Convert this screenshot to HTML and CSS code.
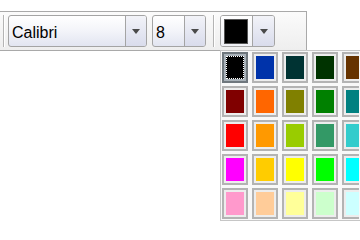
FILE: index.html
```html
<!DOCTYPE html>
<html>
<head>
<meta charset="utf-8">
<link rel="stylesheet" href="styles.css">
</head>
<body>
<div class="toolbar">
  <span class="sep"></span>
  <div class="combo font">
    <span class="value">Calibri</span>
    <span class="drop"><span class="arrow"></span></span>
  </div>
  <div class="combo size">
    <span class="value">8</span>
    <span class="drop"><span class="arrow"></span></span>
  </div>
  <span class="sep sep2"></span>
  <div class="combo colorbtn">
    <span class="swatch-wrap"><span class="swatch"></span></span>
    <span class="drop"><span class="arrow"></span></span>
  </div>
</div>
<div class="palette">
  <div class="grid">
    <span class="cell selected"><span class="fill" style="background:#000000"></span></span>
    <span class="cell"><span class="fill" style="background:#0033aa"></span></span>
    <span class="cell"><span class="fill" style="background:#003333"></span></span>
    <span class="cell"><span class="fill" style="background:#003300"></span></span>
    <span class="cell"><span class="fill" style="background:#663300"></span></span>
    <span class="cell"><span class="fill" style="background:#800000"></span></span>
    <span class="cell"><span class="fill" style="background:#ff6600"></span></span>
    <span class="cell"><span class="fill" style="background:#808000"></span></span>
    <span class="cell"><span class="fill" style="background:#008000"></span></span>
    <span class="cell"><span class="fill" style="background:#008080"></span></span>
    <span class="cell"><span class="fill" style="background:#ff0000"></span></span>
    <span class="cell"><span class="fill" style="background:#ff9900"></span></span>
    <span class="cell"><span class="fill" style="background:#99cc00"></span></span>
    <span class="cell"><span class="fill" style="background:#339966"></span></span>
    <span class="cell"><span class="fill" style="background:#33cccc"></span></span>
    <span class="cell"><span class="fill" style="background:#ff00ff"></span></span>
    <span class="cell"><span class="fill" style="background:#ffcc00"></span></span>
    <span class="cell"><span class="fill" style="background:#ffff00"></span></span>
    <span class="cell"><span class="fill" style="background:#00ff00"></span></span>
    <span class="cell"><span class="fill" style="background:#00ffff"></span></span>
    <span class="cell"><span class="fill" style="background:#ff99cc"></span></span>
    <span class="cell"><span class="fill" style="background:#ffcc99"></span></span>
    <span class="cell"><span class="fill" style="background:#ffff99"></span></span>
    <span class="cell"><span class="fill" style="background:#ccffcc"></span></span>
    <span class="cell"><span class="fill" style="background:#ccffff"></span></span>
  </div>
</div>
</body>
</html>
```
FILE: styles.css
```css
* { box-sizing: border-box; }
html, body { margin: 0; padding: 0; background: #ffffff; }
body {
  width: 360px;
  height: 240px;
  overflow: hidden;
  position: relative;
  font-family: "Liberation Sans", Arial, sans-serif;
}
.toolbar {
  margin-top: 11px;
  width: 307px;
  height: 40px;
  display: flex;
  align-items: center;
  padding-left: 3px;
  border-top: 1px solid #a9a9a9;
  border-bottom: 1px solid #a9a9a9;
  border-right: 1px solid #a9a9a9;
  background: linear-gradient(#fbfbfb, #eeeeee);
}
.sep {
  width: 2px;
  height: 32px;
  border-left: 1px solid #b4b4b4;
  border-right: 1px solid #ffffff;
  margin-right: 3px;
}
.sep2 { margin-left: 7px; margin-right: 5px; }
.combo {
  height: 32px;
  display: flex;
  border: 1px solid #a4a4a4;
  border-radius: 3px;
  background: linear-gradient(#ffffff 0%, #f3f4f9 50%, #e2e5f1 100%);
  overflow: hidden;
}
.font { width: 139px; }
.size { width: 54px; margin-left: 5px; }
.value {
  flex: 1;
  font-size: 16px;
  line-height: 30px;
  padding-left: 3px;
  padding-top: 2px;
  color: #000;
}
.drop {
  width: 21px;
  border-left: 1px solid #a4a4a4;
  display: flex;
  align-items: center;
  justify-content: center;
  background: linear-gradient(#f2f3f8, #d9dcec);
}
.arrow {
  width: 0;
  height: 0;
  border-left: 4px solid transparent;
  border-right: 4px solid transparent;
  border-top: 5px solid #4a4a4a;
  margin-top: 1px;
}
.colorbtn { width: 55px; }
.swatch-wrap {
  width: 32px;
  display: flex;
  align-items: center;
  padding-left: 3px;
  background: linear-gradient(#ffffff, #f0f1f6);
}
.swatch {
  width: 24px;
  height: 25px;
  background: #000;
  border: 1px solid #555;
}
.colorbtn .drop { width: 22px; }
.palette {
  position: absolute;
  left: 220px;
  top: 50px;
  width: 140px;
  height: 171px;
  border: 1px solid #c6c6c6;
  border-right: none;
  background: #f8f8f8;
  padding: 1px 0 1px 1px;
  overflow: hidden;
}
.grid {
  display: grid;
  grid-template-columns: repeat(4, 26px) 17px;
  grid-auto-rows: 31px;
  column-gap: 4px;
  row-gap: 3px;
}
.cell {
  display: block;
  border: 2px solid #b3b3b3;
  padding: 2px;
  background: #ededed;
  overflow: hidden;
}
.grid .cell:nth-child(5n) {
  border-right: none;
  padding-right: 0;
}
.fill {
  display: block;
  width: 100%;
  height: 100%;
}
.cell.selected {
  border-color: #6f777d;
  background: #aab3ba;
}
.cell.selected .fill {
  outline: 1px dotted #ffffff;
  outline-offset: -1px;
}
```
